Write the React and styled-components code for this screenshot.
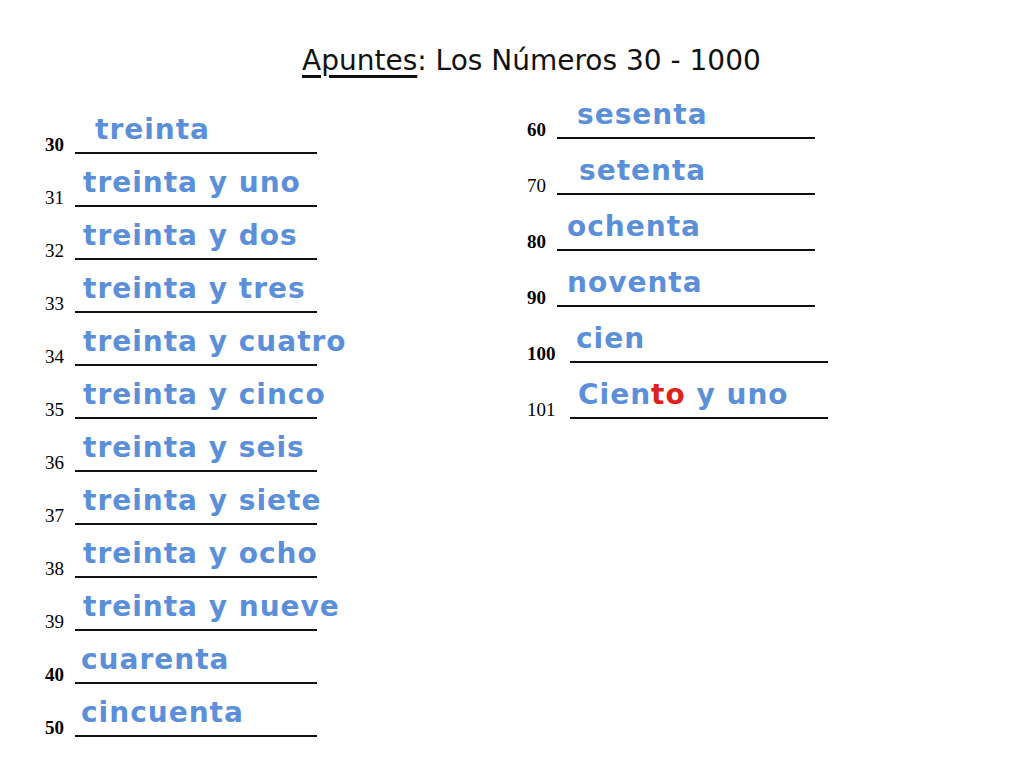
import React from "react";
import styled, { createGlobalStyle } from "styled-components";

const Global = createGlobalStyle`
  body { margin: 0; background: #fff; }
`;

const Page = styled.div`
  width: 1024px;
  height: 768px;
  position: relative;
  font-family: "DejaVu Sans", sans-serif;
`;

const Title = styled.h1`
  margin: 0;
  padding-top: 44px;
  padding-left: 302px;
  font-weight: normal;
  font-size: 28px;
  color: #111;
  u { text-decoration-thickness: 3px; text-underline-offset: 5px; }
`;

const Columns = styled.div`
  display: flex;
`;

const Column = styled.div`
  margin-left: ${(p) => p.left}px;
  margin-top: ${(p) => p.top}px;
  display: flex;
  flex-direction: column;
`;

const Row = styled.div`
  display: flex;
  align-items: flex-end;
  height: ${(p) => p.h}px;
`;

const Num = styled.span`
  font-family: "Liberation Serif", serif;
  font-size: 19px;
  font-weight: ${(p) => (p.bold ? 700 : 400)};
  width: ${(p) => p.w}px;
  margin-bottom: -2px;
`;

const Field = styled.div`
  width: ${(p) => p.w}px;
  height: 46px;
  border-bottom: 2px solid #111;
  display: flex;
  align-items: flex-end;
  padding-left: ${(p) => p.pad}px;
  padding-bottom: 8px;
  box-sizing: border-box;
  white-space: pre;
  font-size: 28px;
  letter-spacing: 1px;
  font-weight: 700;
  color: #5b8fd9;
  line-height: 1;
`;

const Red = styled.span`
  color: #e0201a;
`;

const left = [
  ["30", true, "treinta", 20],
  ["31", false, "treinta y uno", 8],
  ["32", false, "treinta y dos", 8],
  ["33", false, "treinta y tres", 8],
  ["34", false, "treinta y cuatro", 8],
  ["35", false, "treinta y cinco", 8],
  ["36", false, "treinta y seis", 8],
  ["37", false, "treinta y siete", 8],
  ["38", false, "treinta y ocho", 8],
  ["39", false, "treinta y nueve", 8],
  ["40", true, "cuarenta", 6],
  ["50", true, "cincuenta", 6],
];

const right = [
  ["60", true, "sesenta", 20],
  ["70", false, "setenta", 22],
  ["80", true, "ochenta", 10],
  ["90", true, "noventa", 10],
  ["100", true, "cien", 6],
  ["101", false, <span>Cien<Red>to</Red>{" y uno"}</span>, 8],
];

export default function App() {
  return (
    <Page>
      <Global />
      <Title>
        <u>Apuntes</u>: Los Números 30 - 1000
      </Title>
      <Columns>
        <Column left={45} top={24}>
          {left.map(([n, b, t, p]) => (
            <Row key={n} h={53}>
              <Num bold={b} w={30}>{n}</Num>
              <Field w={242} pad={p}>{t}</Field>
            </Row>
          ))}
        </Column>
        <Column left={210} top={6}>
          {right.map(([n, b, t, p]) => (
            <Row key={n} h={56}>
              <Num bold={b} w={n.length > 2 ? 43 : 30}>{n}</Num>
              <Field w={258} pad={p}>{t}</Field>
            </Row>
          ))}
        </Column>
      </Columns>
    </Page>
  );
}
